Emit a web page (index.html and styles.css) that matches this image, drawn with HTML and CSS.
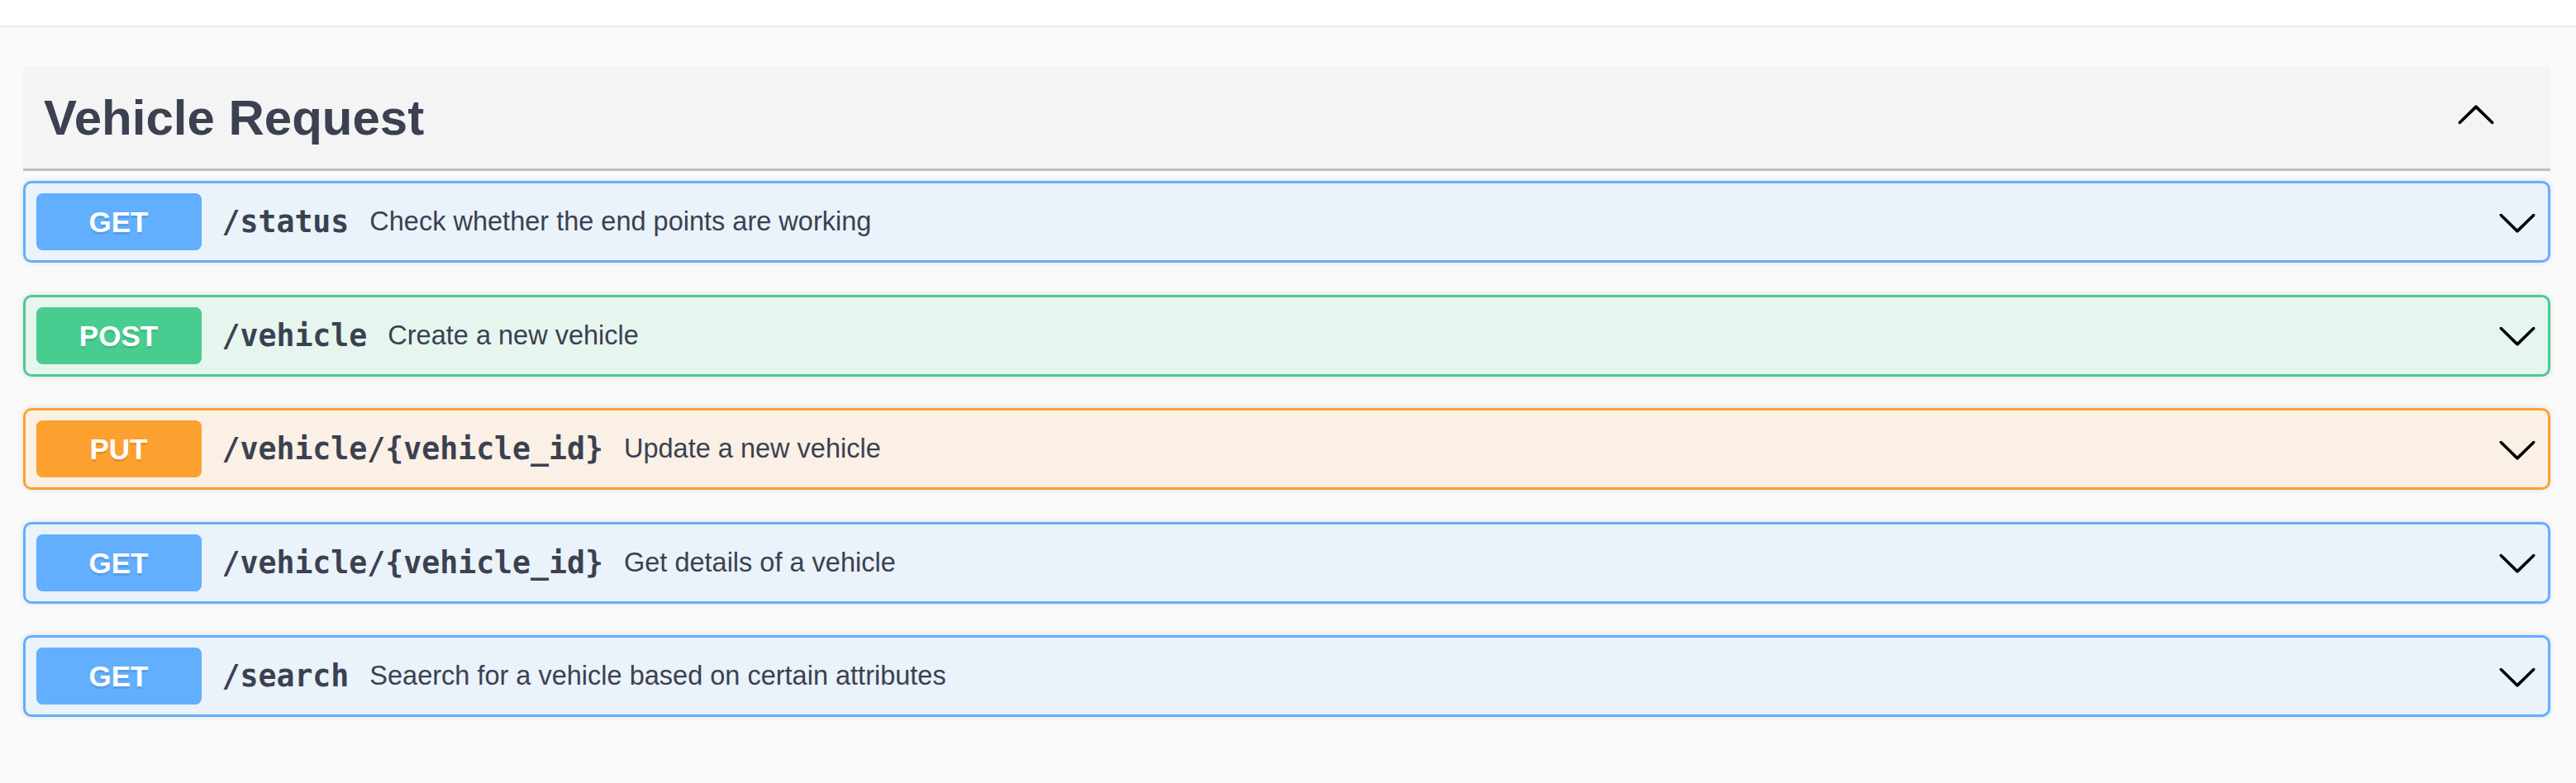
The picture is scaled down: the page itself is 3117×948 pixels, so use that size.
FILE: index.html
```html
<!DOCTYPE html>
<html lang="en">
<head>
<meta charset="utf-8">
<title>Vehicle Request</title>
<link rel="stylesheet" href="styles.css">
</head>
<body>
<div class="topbar"></div>
<section class="tag-section">
  <div class="tag-header">
    <h3 class="tag-title">Vehicle Request</h3>
    <svg class="arrow arrow-up" viewBox="0 0 20 20" width="50" height="50" aria-hidden="true"><path d="M17.418 6.109c.272-.268.709-.268.979 0s.271.701 0 .969l-7.908 7.83c-.27.268-.707.268-.979 0l-7.908-7.83c-.27-.268-.27-.701 0-.969.271-.268.709-.268.979 0L10 13.25l7.418-7.141z"/></svg>
  </div>
  <div class="ops">
    <div class="opblock get">
      <div class="summary">
        <span class="method">GET</span>
        <span class="path">/status</span>
        <span class="desc">Check whether the end points are working</span>
        <svg class="arrow" viewBox="0 0 20 20" width="50" height="50" aria-hidden="true"><path d="M17.418 6.109c.272-.268.709-.268.979 0s.271.701 0 .969l-7.908 7.83c-.27.268-.707.268-.979 0l-7.908-7.830c-.27-.268-.27-.701 0-.969.271-.268.709-.268.979 0L10 13.25l7.418-7.141z"/></svg>
      </div>
    </div>
    <div class="opblock post">
      <div class="summary">
        <span class="method">POST</span>
        <span class="path">/vehicle</span>
        <span class="desc">Create a new vehicle</span>
        <svg class="arrow" viewBox="0 0 20 20" width="50" height="50" aria-hidden="true"><path d="M17.418 6.109c.272-.268.709-.268.979 0s.271.701 0 .969l-7.908 7.83c-.27.268-.707.268-.979 0l-7.908-7.83c-.27-.268-.27-.701 0-.969.271-.268.709-.268.979 0L10 13.25l7.418-7.141z"/></svg>
      </div>
    </div>
    <div class="opblock put">
      <div class="summary">
        <span class="method">PUT</span>
        <span class="path">/vehicle/{vehicle_id}</span>
        <span class="desc">Update a new vehicle</span>
        <svg class="arrow" viewBox="0 0 20 20" width="50" height="50" aria-hidden="true"><path d="M17.418 6.109c.272-.268.709-.268.979 0s.271.701 0 .969l-7.908 7.83c-.27.268-.707.268-.979 0l-7.908-7.83c-.27-.268-.27-.701 0-.969.271-.268.709-.268.979 0L10 13.25l7.418-7.141z"/></svg>
      </div>
    </div>
    <div class="opblock get">
      <div class="summary">
        <span class="method">GET</span>
        <span class="path">/vehicle/{vehicle_id}</span>
        <span class="desc">Get details of a vehicle</span>
        <svg class="arrow" viewBox="0 0 20 20" width="50" height="50" aria-hidden="true"><path d="M17.418 6.109c.272-.268.709-.268.979 0s.271.701 0 .969l-7.908 7.83c-.27.268-.707.268-.979 0l-7.908-7.83c-.27-.268-.27-.701 0-.969.271-.268.709-.268.979 0L10 13.25l7.418-7.141z"/></svg>
      </div>
    </div>
    <div class="opblock get">
      <div class="summary">
        <span class="method">GET</span>
        <span class="path">/search</span>
        <span class="desc">Seaerch for a vehicle based on certain attributes</span>
        <svg class="arrow" viewBox="0 0 20 20" width="50" height="50" aria-hidden="true"><path d="M17.418 6.109c.272-.268.709-.268.979 0s.271.701 0 .969l-7.908 7.83c-.27.268-.707.268-.979 0l-7.908-7.83c-.27-.268-.27-.701 0-.969.271-.268.709-.268.979 0L10 13.25l7.418-7.141z"/></svg>
      </div>
    </div>
  </div>
</section>
</body>
</html>
```

FILE: styles.css
```css
html, body {
  margin: 0;
  padding: 0;
}
body {
  background: #fafafa;
  font-family: "Liberation Sans", Arial, sans-serif;
  color: #3b4151;
  height: 948px;
  overflow: hidden;
}
.topbar {
  height: 31px;
  background: #ffffff;
  box-shadow: 0 1px 3px rgba(0, 0, 0, 0.13);
}
.tag-section {
  margin: 50px 31px 0 28px;
  display: flex;
  flex-direction: column;
}
.tag-header {
  display: flex;
  align-items: center;
  background: #f4f4f4;
  border-bottom: 3px solid rgba(59, 65, 81, 0.3);
  padding: 25px 65px 25px 25px;
  margin-bottom: 12px;
}
.tag-title {
  flex: 1 1 auto;
  margin: 0;
  font-size: 60px;
  font-weight: 700;
  line-height: 73px;
  color: #3b4151;
}
.arrow {
  flex: 0 0 auto;
  display: block;
  fill: #000;
}
.arrow-up {
  transform: rotate(180deg);
  margin-top: -6px;
}
.ops {
  display: flex;
  flex-direction: column;
}
.opblock {
  border: 3px solid #000;
  border-radius: 10px;
  box-shadow: 0 0 7px rgba(0, 0, 0, 0.12);
  margin-bottom: 38.5px;
}
.opblock.get {
  border-color: #61affe;
  background: rgba(97, 175, 254, 0.1);
}
.opblock.post {
  border-color: #49cc90;
  background: rgba(73, 204, 144, 0.1);
}
.opblock.put {
  border-color: #fca130;
  background: rgba(252, 161, 48, 0.1);
}
.summary {
  display: flex;
  align-items: center;
  padding: 12px 12px 12px 12.5px;
}
.method {
  min-width: 200px;
  padding: 15px 0;
  line-height: 39px;
  font-size: 35px;
  font-weight: 700;
  text-align: center;
  color: #fff;
  border-radius: 7.5px;
  text-shadow: 0 2.5px 0 rgba(0, 0, 0, 0.1);
}
.get .method { background: #61affe; }
.post .method { background: #49cc90; }
.put .method { background: #fca130; }
.path {
  padding: 0 25px;
  font-family: "DejaVu Sans Mono", "Liberation Mono", monospace;
  font-weight: 700;
  font-size: 36.5px;
  color: #3b4151;
}
.desc {
  flex: 1 1 auto;
  font-size: 32.5px;
  color: #3b4151;
}
```
